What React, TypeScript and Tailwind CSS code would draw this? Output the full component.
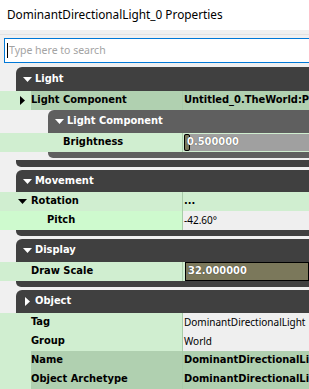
import React from "react";

const B = "font-['DejaVu_Sans_Condensed','DejaVu_Sans',sans-serif] font-bold text-[11px]";
const S = "font-['Noto_Sans',sans-serif]";

function TriDown({ color }: { color: string }) {
  return (
    <svg width="9" height="5" viewBox="0 0 9 5" className="block">
      <polygon points="0,0 9,0 4.5,5" fill={color} />
    </svg>
  );
}
function TriRight({ color }: { color: string }) {
  return (
    <svg width="5" height="9" viewBox="0 0 5 9" className="block">
      <polygon points="0,0 5,4.5 0,9" fill={color} />
    </svg>
  );
}

function Header({
  left,
  text,
  h,
  bg,
  open = true,
}: {
  left: number;
  text: string;
  h: string;
  bg: string;
  open?: boolean;
}) {
  return (
    <div className={`flex ${h}`}>
      <div
        className={`flex flex-1 items-center rounded-tl-[6px] ${bg} ${left === 16 ? "ml-[16px]" : "ml-[48px]"}`}
      >
        {open ? (
          <span className="ml-[7px] w-[12px]">
            <TriDown color="#ffffff" />
          </span>
        ) : (
          <span className="ml-[9px] w-[10px]">
            <TriRight color="#ffffff" />
          </span>
        )}
        <span className={`${B} text-white`}>{text}</span>
      </div>
    </div>
  );
}

function Footer({ left, h, bg }: { left: number; h: string; bg: string }) {
  return (
    <div className={`flex ${h}`}>
      <div className={`flex-1 rounded-bl-[5px] ${bg} ${left === 16 ? "ml-[16px]" : "ml-[48px]"}`} />
    </div>
  );
}

type RowProps = {
  label: string;
  pad: string;
  tri?: "right" | "down";
  labelBg: string;
  hiBg?: string;
  children: React.ReactNode;
  valueBg: string;
};

function Row({ label, pad, tri, labelBg, hiBg, children, valueBg }: RowProps) {
  return (
    <div className="flex h-[19px]">
      <div className={`flex w-[182px] ${labelBg}`}>
        <div className="flex w-[31px] items-center">
          {tri === "right" && (
            <span className="ml-[20px]">
              <TriRight color="#000000" />
            </span>
          )}
          {tri === "down" && (
            <span className="ml-[18px]">
              <TriDown color="#000000" />
            </span>
          )}
        </div>
        <div className={`flex flex-1 items-center ${hiBg ?? ""} ${pad}`}>
          <span className={`${B} text-black`}>{label}</span>
        </div>
      </div>
      <div className={`flex flex-1 items-center border-l border-[#a9cba9] ${valueBg} whitespace-nowrap overflow-hidden`}>
        {children}
      </div>
    </div>
  );
}

const LG = "bg-[#d0eed0]";
const DG = "bg-[#b0d0b0]";
const GR = "bg-[#efefef]";

export default function App() {
  return (
    <div className="w-[309px] h-[389px] overflow-hidden bg-[#f0f0f0] whitespace-nowrap">
      <div className="flex h-[30px] items-center bg-white pl-[7px]">
        <span className={`${S} text-[11.8px] text-black`}>DominantDirectionalLight_0 Properties</span>
      </div>
      <div className="h-[4px]" />
      <div className="h-[1px] bg-[#e2e2e2]" />
      <div className="h-[3px]" />
      <div className="ml-[4px] flex h-[25px] w-[320px] items-center border border-[#0078d7] bg-white">
        <span className="ml-[2px] h-[15px] w-[1px] bg-black" />
        <span className={`${S} ml-[1px] text-[10.5px] text-[#a3a3a3]`}>Type here to search</span>
      </div>
      <div className="h-[4px]" />

      <Header left={16} text="Light" h="h-[24px]" bg="bg-[#404040]" />
      <Row label="Light Component" pad="" tri="right" labelBg={LG} hiBg={DG} valueBg={DG}>
        <span className={`${B} ml-[1px] text-black`}>
          Untitled_0.TheWorld:PersistentLevel.DominantDirectionalLight_0
        </span>
      </Row>
      <Header left={48} text="Light Component" h="h-[23px]" bg="bg-[#5f5f5f]" />
      <Row label="Brightness" pad="pl-[32px]" labelBg={LG} valueBg={LG}>
        <div className="ml-[1px] flex h-[17px] flex-1 items-center bg-[#a0a0a0]">
          <div className="h-[17px] w-[6px] rounded-[2px] border border-black bg-[#7b785b]" />
          <span className={`${B} ml-[-3px] text-white [text-shadow:0_0_1px_#3a3a3a]`}>0.500000</span>
        </div>
      </Row>
      <Footer left={48} h="h-[6px]" bg="bg-[#5f5f5f]" />
      <div className="h-[2px]" />
      <Footer left={16} h="h-[7px]" bg="bg-[#404040]" />
      <div className="h-[3px]" />

      <Header left={16} text="Movement" h="h-[22px]" bg="bg-[#404040]" />
      <Row label="Rotation" pad="" tri="down" labelBg={LG} valueBg={LG}>
        <span className={`${B} ml-[1px] text-black`}>...</span>
      </Row>
      <Row label="Pitch" pad="pl-[16px]" labelBg="bg-[#ceface]" valueBg={GR}>
        <span className={`${S} ml-[1px] text-[10px] text-black`}>-42.60°</span>
      </Row>
      <Footer left={16} h="h-[6px]" bg="bg-[#404040]" />
      <div className="h-[3px]" />

      <Header left={16} text="Display" h="h-[23px]" bg="bg-[#404040]" />
      <Row label="Draw Scale" pad="" labelBg={LG} valueBg={LG}>
        <div className="ml-[2px] flex h-[19px] flex-1 items-center border border-black bg-[#7b785b]">
          <span className={`${B} ml-[2px] text-white [text-shadow:0_0_1px_#2a2a2a]`}>32.000000</span>
        </div>
      </Row>
      <Footer left={16} h="h-[6px]" bg="bg-[#404040]" />
      <div className="h-[3px]" />

      <Header left={16} text="Object" h="h-[23px]" bg="bg-[#404040]" open={false} />
      <Row label="Tag" pad="" labelBg={LG} valueBg={GR}>
        <span className={`${S} ml-[1px] text-[10px] text-black`}>DominantDirectionalLight</span>
      </Row>
      <Row label="Group" pad="" labelBg={LG} valueBg={GR}>
        <span className={`${S} ml-[1px] text-[10px] text-black`}>World</span>
      </Row>
      <Row label="Name" pad="" labelBg={LG} hiBg={DG} valueBg={DG}>
        <span className={`${B} ml-[1px] text-black`}>DominantDirectionalLight_0</span>
      </Row>
      <Row label="Object Archetype" pad="" labelBg={LG} hiBg={DG} valueBg={DG}>
        <span className={`${B} ml-[1px] text-black`}>
          DominantDirectionalLight'Engine.Default__DominantDirectionalLight'
        </span>
      </Row>
    </div>
  );
}
